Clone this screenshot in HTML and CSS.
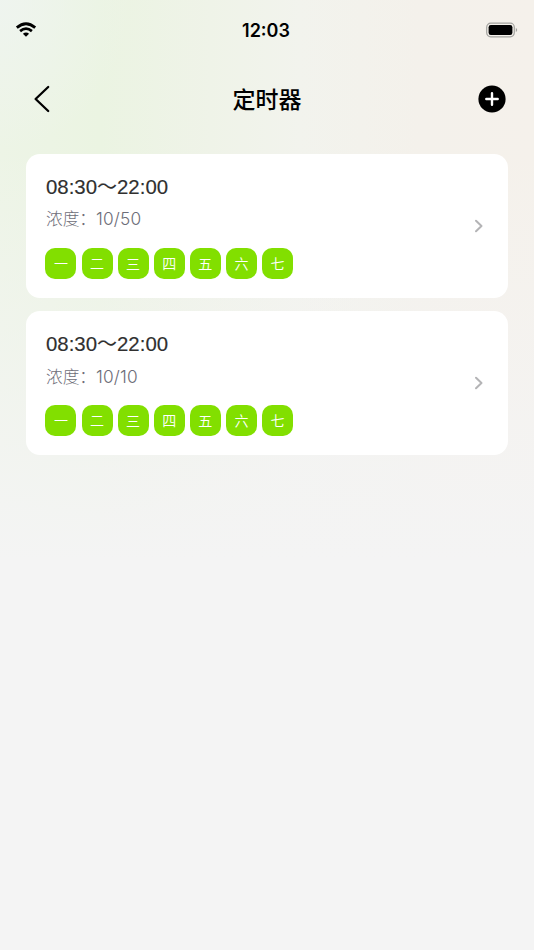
FILE: index.html
```html
<!DOCTYPE html>
<html lang="zh-CN">
<head>
    <meta charset="utf-8">
    <title>定时器</title>
    <link rel="stylesheet" href="styles.css">
</head>
<body>
    <div class="status-bar">
        <svg class="wifi" width="22" height="16" viewBox="0 0 22 16">
            <path d="M1.8 5.6 Q11 -2.2 20.2 5.6" fill="none" stroke="#000" stroke-width="2.8"/>
            <path d="M5.1 9.1 Q11 4.1 16.9 9.1" fill="none" stroke="#000" stroke-width="2.7"/>
            <path d="M7.9 11.8 Q11 9.3 14.1 11.8 L11 14.8 Z"/>
        </svg>
        <span class="clock">12:03</span>
        <svg class="battery" width="32" height="16" viewBox="0 0 32 16">
            <rect x="0.7" y="1.2" width="27.6" height="13.6" rx="4" fill="none" stroke="#a3a39f" stroke-width="1.2"/>
            <rect x="2.6" y="3" width="23.8" height="10" rx="2.2"/>
            <path d="M29.8 6 Q31.2 6.6 31.2 8 Q31.2 9.4 29.8 10 Z" fill="#a3a39f"/>
        </svg>
    </div>

    <header class="nav">
        <svg class="back" width="18" height="28" viewBox="0 0 18 28">
            <path d="M15.2 2 L2.6 14 L15.2 26" fill="none" stroke="#000" stroke-width="2.3" stroke-linecap="round" stroke-linejoin="round"/>
        </svg>
        <h1>定时器</h1>
        <svg class="add" width="28" height="28" viewBox="0 0 28 28">
            <circle cx="14" cy="14" r="13.6"/>
            <path d="M14 8.3 V19.7 M8.3 14 H19.7" stroke="#fff" stroke-width="2.4" stroke-linecap="round"/>
        </svg>
    </header>

    <main class="timers">
        <section class="card">
            <div class="info">
                <div class="time">08:30<span class="tilde">～</span>22:00</div>
                <div class="level"><span class="label">浓度：</span>10/50</div>
                <div class="days">
                    <span>一</span><span>二</span><span>三</span><span>四</span><span>五</span><span>六</span><span>七</span>
                </div>
            </div>
            <svg class="arrow" width="10" height="14" viewBox="0 0 10 14">
                <path d="M2 1.7 L7.5 7 L2 12.3" fill="none" stroke="#b4b4b6" stroke-width="2" stroke-linecap="round" stroke-linejoin="round"/>
            </svg>
        </section>
        <section class="card">
            <div class="info">
                <div class="time">08:30<span class="tilde">～</span>22:00</div>
                <div class="level"><span class="label">浓度：</span>10/10</div>
                <div class="days">
                    <span>一</span><span>二</span><span>三</span><span>四</span><span>五</span><span>六</span><span>七</span>
                </div>
            </div>
            <svg class="arrow" width="10" height="14" viewBox="0 0 10 14">
                <path d="M2 1.7 L7.5 7 L2 12.3" fill="none" stroke="#b4b4b6" stroke-width="2" stroke-linecap="round" stroke-linejoin="round"/>
            </svg>
        </section>
    </main>
</body>
</html>
```
FILE: styles.css
```css
* {box-sizing: border-box;}

body {
    margin: 0;
    min-height: 950px;
    font-family: Inter, "Noto Sans CJK SC", sans-serif;
    color: #000;
    background:
        linear-gradient(to bottom, rgba(244, 244, 244, 0), rgba(244, 244, 244, 0) 150px, #f4f4f4 560px),
        radial-gradient(ellipse 130px 150px at 0 0, rgba(239, 244, 241, 0.8), rgba(239, 244, 241, 0)),
        linear-gradient(to right, #edf4e6, #ebf4e2 100px, #eff3e8 210px, #f2f3ed 300px, #f4f1eb 420px, #f5f1eb);
}

.status-bar {
    display: grid;
    grid-template-columns: 1fr auto 1fr;
    align-items: center;
    height: 60px;
    padding: 0 16px 0 15px;
}
.clock {font-size: 18px; font-weight: 600; line-height: 22px; padding-top: 2px; margin-left: -1px;}
.battery {justify-self: end;}

.nav {
    display: grid;
    grid-template-columns: 1fr auto 1fr;
    align-items: center;
    height: 78px;
    padding: 0 27.6px 0 32.5px;
}
.nav h1 {
    margin: 2px 5px 0 0;
    font-size: 23px;
    font-weight: 500;
    line-height: 34px;
}
.add {justify-self: end;}

.timers {
    display: flex;
    flex-direction: column;
    gap: 13px;
    padding: 15.7px 26px 0;
}
.card {
    display: flex;
    align-items: center;
    justify-content: space-between;
    height: 144.4px;
    padding: 0 24.5px 0 20px;
    border-radius: 14px;
    background: #fff;
}
.time {
    font-family: "Liberation Sans", Arial, sans-serif;
    font-size: 20.4px;
    line-height: 28px;
    color: #303030;
    -webkit-text-stroke: 0.15px #303030;
}
.level {
    margin-top: 3.7px;
    font-size: 17.3px;
    font-weight: 300;
    line-height: 28px;
    letter-spacing: 0.15px;
    color: #6d6d78;
}
.tilde, .label {font-family: "Noto Sans CJK SC", sans-serif;}
.tilde {font-size: 20px; line-height: 20px;}
.label {font-size: 16.7px; letter-spacing: 0;}
.days {
    display: flex;
    gap: 5.1px;
    margin: 14.5px 0 0 -0.6px;
}
.days span {
    width: 31px;
    height: 31px;
    border-radius: 10px;
    background: #82df00;
    color: #fff;
    font-size: 14px;
    font-weight: 350;
    line-height: 31px;
    text-align: center;
}
```
